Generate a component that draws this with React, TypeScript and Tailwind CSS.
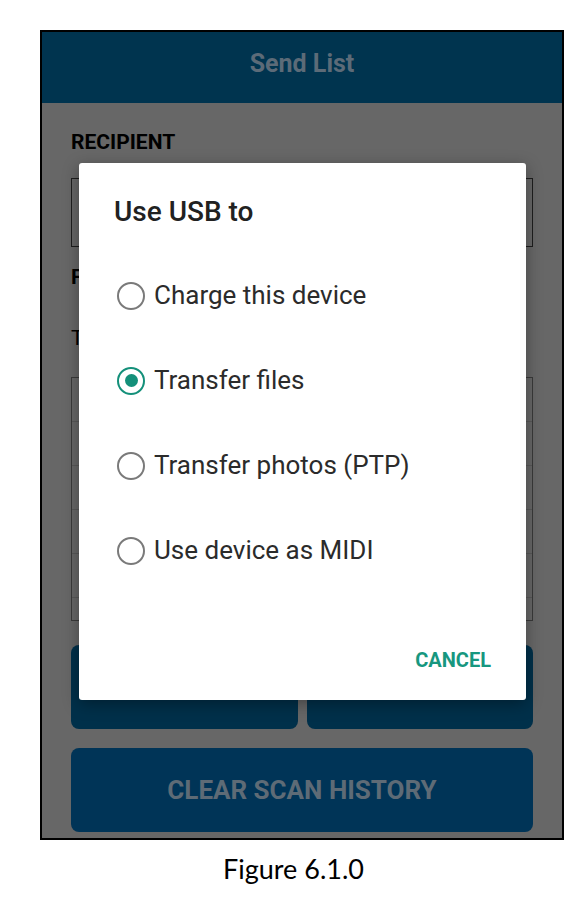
import React, { useState } from 'react';

const options = [
  'Charge this device',
  'Transfer files',
  'Transfer photos (PTP)',
  'Use device as MIDI',
];

function Radio({ checked }: { checked: boolean }) {
  return (
    <span
      className={`flex h-[28px] w-[28px] shrink-0 items-center justify-center rounded-full border-[2.5px] ${
        checked ? 'border-[#14907a]' : 'border-[#7a7a7a]'
      }`}
    >
      {checked && <span className="h-[13px] w-[13px] rounded-full bg-[#14907a]"></span>}
    </span>
  );
}

function UsbDialog() {
  const [selected, setSelected] = useState(1);

  return (
    <div className="absolute left-[37px] top-[131px] flex h-[537px] w-[447px] flex-col rounded-[3px] bg-white shadow-[0_4px_16px_rgba(0,0,0,0.35)]">
      <h2 className="pl-[35px] pt-[32px] text-[28px] leading-[34px] font-medium text-[#212121]">Use USB to</h2>
      <div className="mt-[24px] flex flex-col">
        {options.map((label, i) => (
          <button
            key={label}
            type="button"
            onClick={() => setSelected(i)}
            className="flex h-[85px] items-center gap-[9px] pl-[38px] text-left"
          >
            <Radio checked={selected === i} />
            <span className="text-[26px] text-[#2b2b2b]">{label}</span>
          </button>
        ))}
      </div>
      <div className="mt-[53px] flex justify-end pr-[35px]">
        <button type="button" className="text-[20px] leading-[28px] font-bold text-[#17977f]">
          CANCEL
        </button>
      </div>
    </div>
  );
}

export default function App() {
  return (
    <div className="min-h-[908px] bg-white font-['Roboto','Liberation_Sans',sans-serif]">
      <div className="h-[30px]"></div>
      <div className="relative ml-[40px] flex w-[524px] flex-col border-2 border-black">
        <div className="flex h-[71px] items-center justify-center bg-[#00344f] pb-[8px]">
          <span className="text-[25px] font-bold text-[#5c6b78]">Send List</span>
        </div>

        <div className="flex flex-col bg-[#676767] px-[29px] pb-[6px]">
          <div className="pt-[27px] text-[21px] leading-[24px] font-bold text-black">RECIPIENT</div>
          <div className="mt-[24px] h-[69px] border-[1.5px] border-[#1e1e1e]"></div>

          <div className="mt-[18px] text-[21px] leading-[24px] font-bold text-black">FILE FORMAT</div>
          <div className="mt-[37px] text-[21px] leading-[24px] text-black">TAGS</div>

          <div className="mt-[27px] flex flex-col border-[1.5px] border-[#3a3a3a]">
            {[0, 1, 2, 3, 4, 5].map((row) => (
              <div
                key={row}
                className={row < 5 ? 'h-[44px] border-b border-[#585858]' : 'h-[22px]'}
              ></div>
            ))}
          </div>

          <div className="mt-[24px] grid grid-cols-2 gap-[9px]">
            <div className="h-[84px] rounded-[8px] bg-[#00304a]"></div>
            <div className="h-[84px] rounded-[8px] bg-[#00304a]"></div>
          </div>

          <div className="mt-[19px] flex h-[84px] items-center justify-center rounded-[8px] bg-[#003457]">
            <span className="text-[26px] font-bold text-[#5e6b76]">CLEAR SCAN HISTORY</span>
          </div>
        </div>

        <UsbDialog />
      </div>

      <p className="mt-[9px] text-center font-['Lato','Open_Sans',sans-serif] text-[27px] text-black">
        Figure 6.1.0
      </p>
    </div>
  );
}
